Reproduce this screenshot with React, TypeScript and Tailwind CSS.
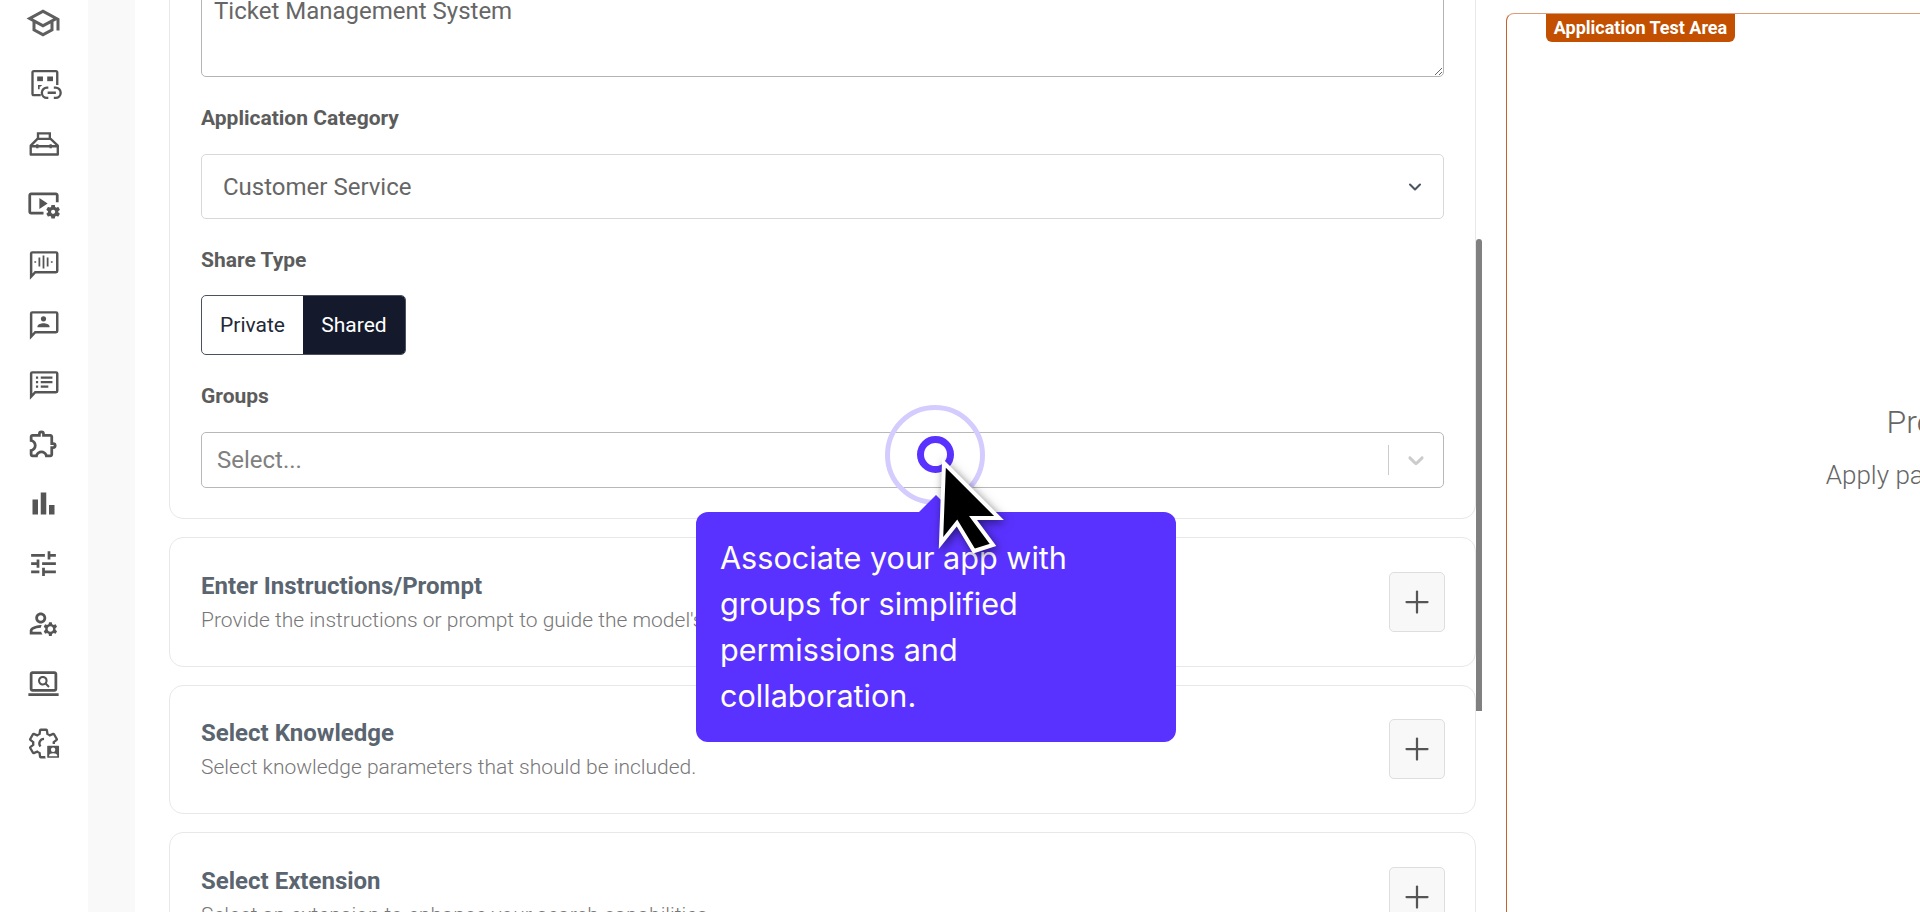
import { ChevronDown, Plus } from "lucide-react";
import {
  MdBarChart,
  MdOutlineExtension,
  MdOutlineManageAccounts,
  MdOutlineSchool,
  MdOutlineScreenSearchDesktop,
  MdOutlineTune,
  MdOutlineVideoSettings,
} from "react-icons/md";

const iconClass = "w-[33px] h-[33px] overflow-visible text-[#555555]";

const Bubble = ({ children }: { children: React.ReactNode }) => (
  <svg viewBox="0 0 24 24" className={iconClass} fill="none" stroke="currentColor" strokeWidth="1.8">
    <path d="M3 21.5V4.8c0-.5.4-.9.9-.9h17.2c.5 0 .9.4.9.9v12.6c0 .5-.4.9-.9.9H6z" />
    {children}
  </svg>
);

const LinkTile = () => (
  <svg viewBox="0 0 24 24" className={iconClass} fill="none" stroke="currentColor" strokeWidth="1.7">
    <path d="M10 20.5H5c-.6 0-1-.4-1-1V4c0-.6.4-1 1-1h16c.6 0 1 .4 1 1v9" />
    <rect x="7.4" y="6.9" width="4.2" height="3.4" fill="currentColor" stroke="none" />
    <rect x="14.7" y="6.9" width="4.2" height="3.4" fill="currentColor" stroke="none" />
    <path d="M8 13h3l-1 1.2H9.2v2H8z" fill="currentColor" stroke="none" />
    <path d="M15.5 15h-1a3.6 3.6 0 0 0 0 7.4h1M19.5 15h1.3a3.6 3.6 0 0 1 0 7.4h-1.3M15 18.7h6" />
  </svg>
);

const Toolbox = () => (
  <svg viewBox="0 0 24 24" className={iconClass} fill="none" stroke="currentColor" strokeWidth="1.7">
    <path d="M2.7 20v-6.5l4.9-4.9h9.6l5.2 4.9V20z" strokeLinejoin="round" />
    <path d="M8 8.6V4.6h8.6v4M2.7 14h19.7M7.5 12.5v3M17.2 12.5v3" />
  </svg>
);

const GearPerson = () => (
  <svg viewBox="0 0 24 24" className={iconClass} fill="none" stroke="currentColor" strokeWidth="1.7">
    <path d="M19.43 12.98c.04-.32.07-.64.07-.98 0-.34-.03-.66-.07-.98l2.11-1.65c.19-.15.24-.42.12-.64l-2-3.46c-.09-.16-.26-.25-.44-.25-.06 0-.12.01-.17.03l-2.49 1c-.52-.4-1.08-.73-1.69-.98l-.38-2.65C14.46 2.18 14.25 2 14 2h-4c-.25 0-.46.18-.49.42l-.38 2.65c-.61.25-1.17.59-1.69.98l-2.49-1c-.06-.02-.12-.03-.18-.03-.17 0-.34.09-.43.25l-2 3.46c-.13.22-.07.49.12.64l2.11 1.65c-.04.32-.07.65-.07.98 0 .33.03.66.07.98l-2.11 1.65c-.19.15-.24.42-.12.64l2 3.46c.09.16.26.25.44.25.06 0 .12-.01.17-.03l2.49-1c.52.4 1.08.73 1.69.98l.38 2.65c.03.24.24.42.49.42h4c.25 0 .46-.18.49-.42l.38-2.65c.61-.25 1.17-.59 1.69-.98l2.49 1c.06.02.12.03.18.03.17 0 .34-.09.43-.25l2-3.46c.12-.22.07-.49-.12-.64l-2.11-1.65z" />
    <path d="M9.8 14.2A3.4 3.4 0 0 1 12.4 8.6" />
    <rect x="14" y="13" width="10" height="10" rx="1" fill="currentColor" stroke="#ffffff" strokeWidth="1.4" />
    <circle cx="19" cy="16.5" r="1.6" fill="#ffffff" stroke="none" />
    <path d="M16.1 21.2v-.6c0-1 1.4-1.6 2.9-1.6s2.9.6 2.9 1.6v.6z" fill="#ffffff" stroke="none" />
  </svg>
);

const navIcons = [
  <MdOutlineSchool className="h-[36px] w-[38px] text-[#5f5f5f]" />,
  <LinkTile />,
  <Toolbox />,
  <MdOutlineVideoSettings className={iconClass} />,
  <Bubble>
    <path d="M12 6.2v9.4M9 7.6v6.6M15 7.6v6.6M6 10.4v1M18 10.4v1" strokeWidth="1.3" />
  </Bubble>,
  <Bubble>
    <circle cx="12" cy="8.6" r="1.9" fill="currentColor" stroke="none" />
    <path d="M7.6 14.8v-.7c0-1.5 2.7-2.3 4.4-2.3s4.4.8 4.4 2.3v.7z" fill="currentColor" stroke="none" />
  </Bubble>,
  <Bubble>
    <path d="M10 7.7h8.5M10 11h8.5M10 14.3h5.5" strokeWidth="1.6" />
    <path d="M6.5 7.7h1.6M6.5 11h1.6M6.5 14.3h1.6" strokeWidth="1.6" />
  </Bubble>,
  <MdOutlineExtension className={iconClass} />,
  <MdBarChart className={iconClass} />,
  <MdOutlineTune className={iconClass} />,
  <MdOutlineManageAccounts className={iconClass} />,
  <MdOutlineScreenSearchDesktop className={iconClass} />,
  <GearPerson />,
];

const sections = [
  { title: "Enter Instructions/Prompt", text: "Provide the instructions or prompt to guide the model's responses." },
  { title: "Select Knowledge", text: "Select knowledge parameters that should be included." },
  { title: "Select Extension", text: "Select an extension to enhance your search capabilities." },
];

const Label = ({ children, className }: { children: string; className: string }) => (
  <div className={`text-[21px] leading-6 font-bold text-[#5c5c5c] ${className}`}>{children}</div>
);

const App = () => {
  return (
    <div className="relative flex h-[912px] w-[1920px] overflow-hidden bg-white font-['Roboto',sans-serif]">
      <nav className="-mt-[7px] flex w-[88px] shrink-0 flex-col items-center">
        {navIcons.map((icon, index) => (
          <div key={index} className="flex h-[60px] w-full shrink-0 items-center justify-center pr-[2px]">
            {icon}
          </div>
        ))}
      </nav>
      <div className="w-[47px] shrink-0 bg-[#f9f9f9]" />

      <main className="-mt-[30px] ml-[34px] flex w-[1307px] shrink-0 flex-col gap-[18px]">
        <section className="rounded-[14px] border border-[#e8e8e8] px-[31px] pt-[17px] pb-[30px]">
          <textarea
            readOnly
            value="Ticket Management System"
            className="block h-[89px] w-full rounded-[5px] border border-[#b4b4b4] px-[12px] pt-[10px] text-[24px] leading-6 text-[#666666] outline-none"
          />
          <Label className="mt-[29px]">Application Category</Label>
          <div className="mt-[24px] flex h-[65px] items-center justify-between rounded-[5px] border border-[#d8d8d8] pt-[1px] pr-[18px] pl-[21px] text-[24px] text-[#666666]">
            <span>Customer Service</span>
            <ChevronDown className="h-5 w-5 text-[#4b5563]" strokeWidth={2.5} />
          </div>
          <Label className="mt-[29px]">Share Type</Label>
          <div className="mt-[23px] flex h-[60px] w-[205px] overflow-hidden rounded-[5px] border border-[#4a5160] text-[21px]">
            <div className="flex w-[101px] items-center justify-center pt-[2px] text-[#1f2937]">Private</div>
            <div className="flex flex-1 items-center justify-center bg-[#141a2c] pt-[2px] text-white">Shared</div>
          </div>
          <Label className="mt-[29px]">Groups</Label>
          <div className="mt-[24px] flex h-[56px] items-center rounded-[5px] border border-[#b8b8b8] pl-[15px] text-[24px] text-[#808080]">
            <span className="flex-1">Select...</span>
            <span className="h-[30px] w-px bg-[#cccccc]" />
            <svg viewBox="0 0 20 20" className="mx-[14px] h-[26px] w-[26px] fill-[#cccccc]">
              <path d="M4.516 7.548c0.436-0.446 1.043-0.481 1.576 0l3.908 3.747 3.908-3.747c0.533-0.481 1.141-0.446 1.576 0 0.436 0.445 0.408 1.197 0 1.615-0.406 0.418-4.695 4.502-4.695 4.502-0.217 0.223-0.502 0.335-0.789 0.335s-0.572-0.112-0.789-0.335c0 0-4.287-4.084-4.695-4.502s-0.436-1.17 0-1.615z" />
            </svg>
          </div>
        </section>

        {sections.map((section) => (
          <section
            key={section.title}
            className="flex h-[129.5px] shrink-0 items-center justify-between rounded-[14px] border border-[#e8e8e8] pr-[30px] pl-[31px]"
          >
            <div>
              <div className="pt-[1px] text-[24px] leading-7 font-bold text-[#5a6570]">{section.title}</div>
              <div className="mt-[7px] text-[21px] leading-[26px] font-light text-[#777777]">{section.text}</div>
            </div>
            <div className="flex h-[60px] w-[56px] items-center justify-center rounded-[5px] border border-[#dedede] bg-[#f8f8f8]">
              <Plus className="h-[36px] w-[36px] text-[#555555]" strokeWidth={1.5} />
            </div>
          </section>
        ))}
      </main>

      <div className="mt-[239px] h-[472px] w-[6px] shrink-0 rounded-t-[3px] bg-[#808080]" />

      <aside className="relative mt-[13px] ml-[24px] h-[1000px] w-[870px] shrink-0 rounded-t-[8px] border-t border-l border-t-[#dd9d78] border-l-[#c4622a]">
        <div className="absolute top-0 left-[39px] flex h-[28px] w-[189px] items-center justify-center rounded-b-[6px] bg-[#c25000] pb-[2px] text-[18px] font-bold text-white">
          Application Test Area
        </div>
        <div className="flex flex-col items-center pt-[385px] font-light text-[#666666]">
          <div className="text-[32px] leading-[46px]">Preview</div>
          <div className="mt-[14px] mr-[2px] text-[26px] leading-8">Apply parameters to</div>
        </div>
      </aside>

      <div className="absolute top-[405px] left-[885px] h-[100px] w-[100px] rounded-full border-[5px] border-[#d4ccff]" />
      <div className="absolute top-[436px] left-[917px] h-[37px] w-[37px] rounded-full border-[7px] border-[#5a32ff]" />

      <div className="absolute top-[512px] left-[696px] w-[480px] rounded-[12px] bg-[#5a32ff] px-[24px] py-[23px] font-['Inter',sans-serif] text-[30.6px] leading-[46px] text-white">
        <div className="absolute -top-3 left-[228px] h-6 w-6 rotate-45 bg-[#5a32ff]" />
        <p className="relative w-[380px]">Associate your app with groups for simplified permissions and collaboration.</p>
      </div>

      <svg
        viewBox="-8 -8 80 110"
        className="absolute top-[455px] left-[936px] h-[110px] w-[80px] drop-shadow-[2px_3px_5px_rgba(0,0,0,0.5)]"
      >
        <path d="M0 0 55 55H29L49 82 30 88 13 60-3 80z" fill="#000000" stroke="#ffffff" strokeWidth="4" />
      </svg>
    </div>
  );
};

export default App;
